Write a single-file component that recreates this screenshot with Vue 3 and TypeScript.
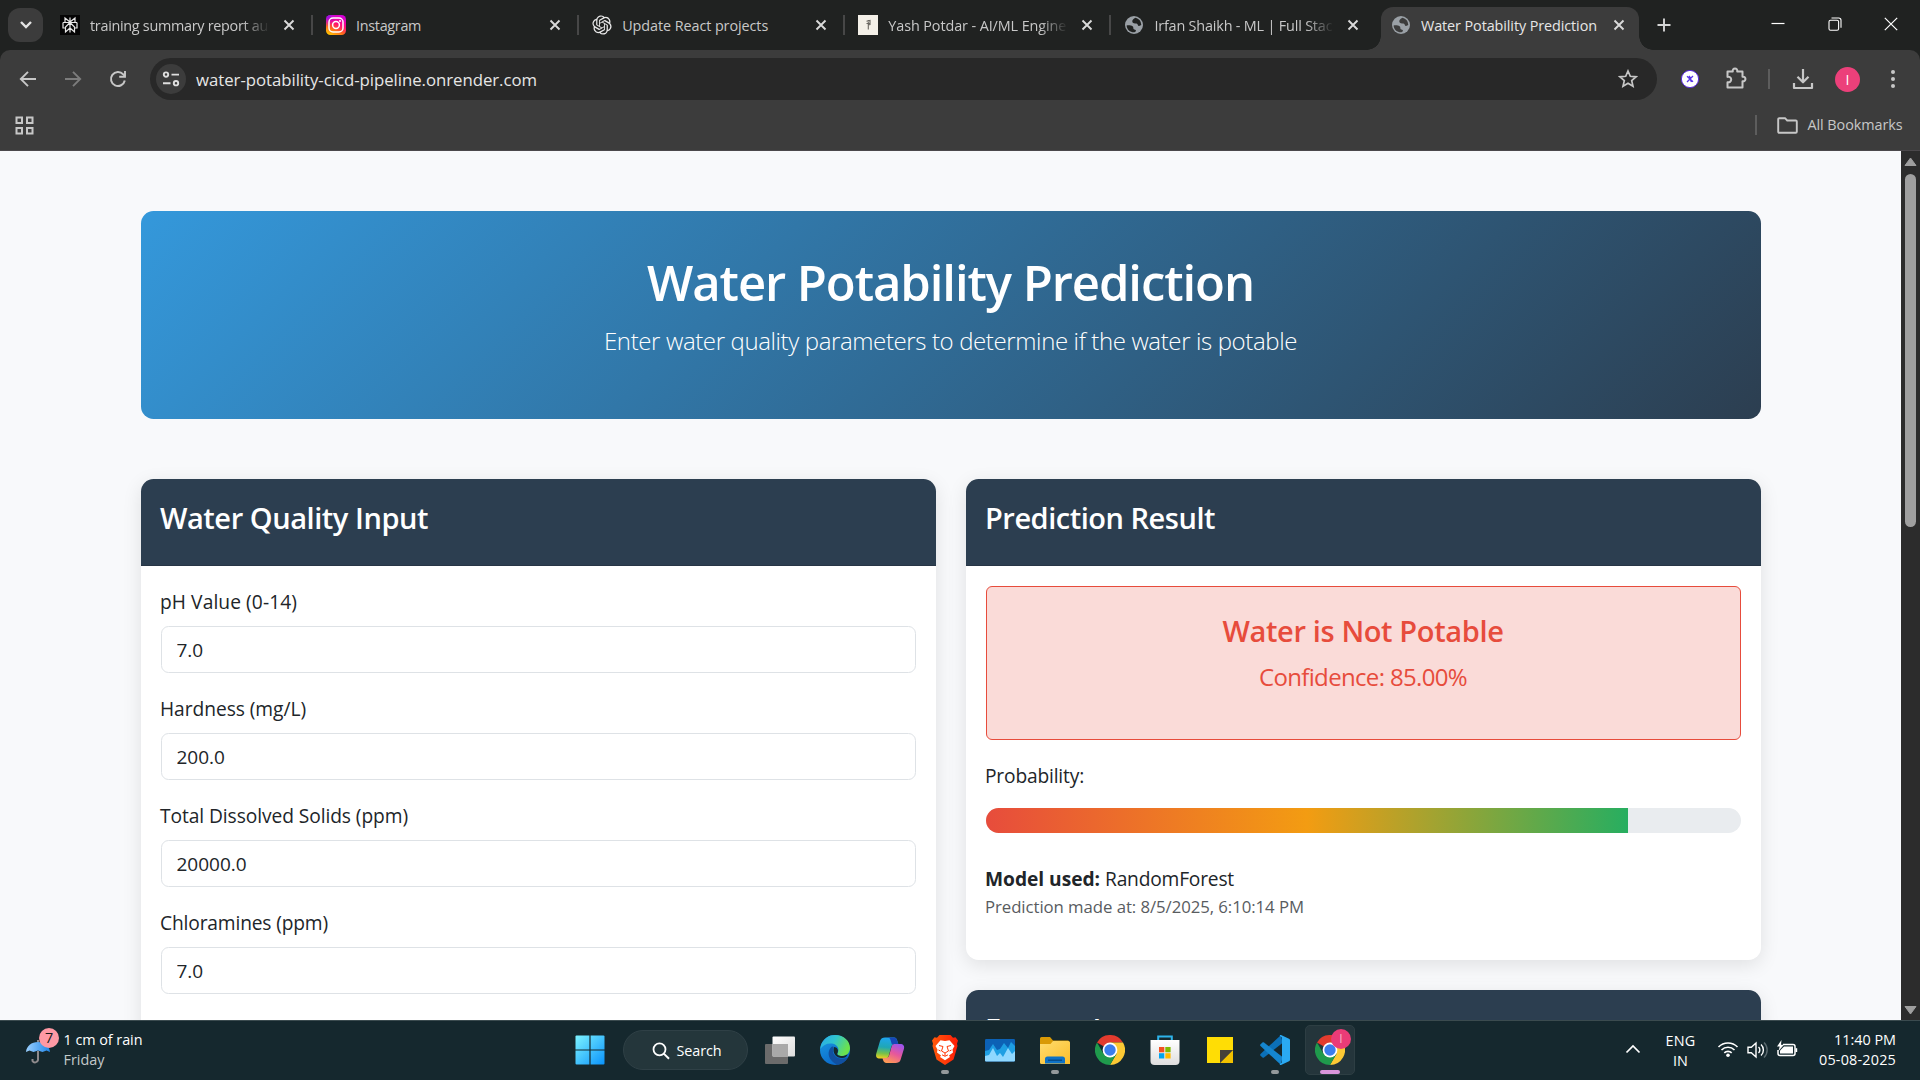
<script setup lang="ts">
import type { Directive } from 'vue'

interface Tab {
  icon: 'perplexity' | 'instagram' | 'openai' | 'page' | 'globe'
  title: string
  width: number
  active?: boolean
}

interface Field {
  label: string
  width: number
  value: string
}

const tabs: Tab[] = [
  { icon: 'perplexity', title: 'training summary report au', width: 178 },
  { icon: 'instagram', title: 'Instagram', width: 65 },
  { icon: 'openai', title: 'Update React projects', width: 146 },
  { icon: 'page', title: 'Yash Potdar - AI/ML Engine', width: 178 },
  { icon: 'globe', title: 'Irfan Shaikh - ML | Full Stac', width: 178 },
  { icon: 'globe', title: 'Water Potability Prediction', width: 176, active: true },
]

const fields: Field[] = [
  { label: 'pH Value (0-14)', width: 137, value: '7.0' },
  { label: 'Hardness (mg/L)', width: 146, value: '200.0' },
  { label: 'Total Dissolved Solids (ppm)', width: 248, value: '20000.0' },
  { label: 'Chloramines (ppm)', width: 168, value: '7.0' },
]

const confidence = 85

/* Tracks a line of text so that it takes the given width in pixels. */
const vFit: Directive<HTMLElement, number> = {
  mounted(el, binding) {
    const count = (el.textContent ?? '').trim().length
    const natural = el.getBoundingClientRect().width
    el.style.letterSpacing = `${((binding.value - natural) / count).toFixed(3)}px`
  },
}
</script>

<template>
  <div class="screen">
    <header class="tabstrip">
      <button class="tab-search">
        <svg width="14" height="10" viewBox="0 0 14 10"><path d="M2 2l5 5 5-5" fill="none" stroke="#e3e3e3" stroke-width="2.4" /></svg>
      </button>
      <div class="tabs">
        <div v-for="(tab, i) in tabs" :key="i" class="tab" :class="{ active: tab.active, divided: i < 4 }">
          <span class="favicon">
            <svg v-if="tab.icon === 'perplexity'" width="20" height="20" viewBox="0 0 20 20">
              <rect width="20" height="20" fill="#050505" />
              <path d="M10 2.500v15M10 7L5 3v4.500M10 7l5-4v4.500M3 7.500h14M3 7.500V13h2.500M17 7.500V13h-2.500M10 7.500L5.500 12v5L10 13M10 7.500l4.500 4.500v5L10 13" fill="none" stroke="#e8e8e8" stroke-width="1.200" />
            </svg>
            <svg v-else-if="tab.icon === 'instagram'" width="20" height="20" viewBox="0 0 20 20">
              <defs>
                <linearGradient id="ig" x1=".2" y1="1" x2=".7" y2="0">
                  <stop offset="0" stop-color="#ffc400" /><stop offset=".3" stop-color="#ff6a1a" />
                  <stop offset=".6" stop-color="#ff0a78" /><stop offset="1" stop-color="#d300d8" />
                </linearGradient>
                <radialGradient id="ig2" cx="0" cy="0" r=".6"><stop offset="0" stop-color="#6a1bff" /><stop offset="1" stop-color="#c000ff" stop-opacity="0" /></radialGradient>
              </defs>
              <rect width="20" height="20" rx="4.500" fill="url(#ig)" />
              <rect width="20" height="20" rx="4.500" fill="url(#ig2)" />
              <rect x="3" y="3" width="14" height="14" rx="4" fill="none" stroke="#fff" stroke-width="1.500" />
              <circle cx="10" cy="10" r="3.400" fill="none" stroke="#fff" stroke-width="1.500" />
              <circle cx="14" cy="6" r="1" fill="#fff" />
            </svg>
            <svg v-else-if="tab.icon === 'openai'" width="20" height="20" viewBox="-.5 -.5 25 25">
              <path fill="#e8e8e8" d="M22.282 9.821a5.985 5.985 0 0 0-.516-4.910 6.046 6.046 0 0 0-6.510-2.900A6.065 6.065 0 0 0 4.981 4.182a5.985 5.985 0 0 0-3.998 2.900 6.046 6.046 0 0 0 .743 7.097 5.980 5.980 0 0 0 .510 4.911 6.051 6.051 0 0 0 6.515 2.900A5.985 5.985 0 0 0 13.260 24a6.056 6.056 0 0 0 5.772-4.206 5.990 5.990 0 0 0 3.998-2.900 6.056 6.056 0 0 0-.748-7.073zM13.260 22.430a4.476 4.476 0 0 1-2.876-1.041l.141-.081 4.779-2.758a.795.795 0 0 0 .393-.681v-6.737l2.020 1.169a.071.071 0 0 1 .038.052v5.583a4.504 4.504 0 0 1-4.495 4.494zM3.600 18.304a4.471 4.471 0 0 1-.535-3.014l.142.085 4.783 2.759a.771.771 0 0 0 .781 0l5.843-3.369v2.332a.080.080 0 0 1-.033.062L9.740 19.950a4.500 4.500 0 0 1-6.140-1.646zM2.341 7.896a4.485 4.485 0 0 1 2.366-1.973V11.600a.766.766 0 0 0 .388.677l5.815 3.354-2.020 1.169a.076.076 0 0 1-.071 0l-4.830-2.787A4.504 4.504 0 0 1 2.341 7.872zm16.597 3.855l-5.833-3.387L15.119 7.200a.076.076 0 0 1 .071 0l4.830 2.791a4.494 4.494 0 0 1-.676 8.105v-5.678a.790.790 0 0 0-.407-.667zm2.010-3.023l-.141-.085-4.774-2.782a.776.776 0 0 0-.785 0L9.409 9.230V6.897a.066.066 0 0 1 .028-.061l4.830-2.787a4.500 4.500 0 0 1 6.680 4.660zm-12.640 4.135l-2.020-1.164a.080.080 0 0 1-.038-.057V6.075a4.500 4.500 0 0 1 7.375-3.453l-.142.080L8.704 5.460a.795.795 0 0 0-.393.681zm1.097-2.365l2.602-1.500 2.607 1.500v2.999l-2.597 1.500-2.607-1.500z" />
            </svg>
            <svg v-else-if="tab.icon === 'page'" width="20" height="20" viewBox="0 0 20 20">
              <rect width="20" height="20" fill="#f4f0e8" />
              <path d="M10.300 5v9.500M8.500 6.200l3.500-.7v4l-2 .5M8.500 8.500h3" stroke="#6b6862" stroke-width="1.100" fill="none" />
            </svg>
            <svg v-else width="20" height="20" viewBox="0 0 20 20">
              <circle cx="10" cy="10" r="9" fill="#9aa0a6" />
              <path d="M11.500 2.700c-2 1-3.500 2-3.200 4 .3 1.800 2.500 1.600 4.200 1.800 1.500.2 1 2.500 2.500 2.500 1 0 1.500-.8 2.300-1A7.300 7.300 0 0 0 11.500 2.700z" :fill="tab.active ? '#3c3c3c' : '#202221'" />
              <path d="M2.600 10.500c2-.3 4.600-.2 6 .8 1.300 1 .2 2.200 1.200 3 .8.600 1.900.2 2.200 1.400-.3.800-.8 1.200-1.500 1.600-4.300.2-7.600-2.600-7.900-6.800z" :fill="tab.active ? '#3c3c3c' : '#202221'" />
            </svg>
          </span>
          <span class="tab-title" :class="{ fading: tab.width === 178 }"><span v-fit="tab.width" class="fit">{{ tab.title }}</span></span>
          <svg class="tab-close" width="12" height="12" viewBox="0 0 12 12"><path d="M1.500 1.500l9 9M10.500 1.500l-9 9" stroke="#dadada" stroke-width="1.900" /></svg>
        </div>
      </div>
      <svg class="new-tab" width="14" height="14" viewBox="0 0 14 14"><path d="M7 .5v13M.5 7h13" stroke="#d5d5d5" stroke-width="1.900" /></svg>
      <div class="window-controls">
        <svg width="14" height="14" viewBox="0 0 14 14"><path d="M.5 6.500h13" stroke="#fff" stroke-width="1.200" /></svg>
        <svg width="14" height="14" viewBox="0 0 14 14"><rect x="1" y="3.200" width="9.600" height="10" rx="1.500" fill="none" stroke="#fff" stroke-width="1.100" /><path d="M3.500 1h7.200a2.300 2.300 0 0 1 2.300 2.300v7.500" fill="none" stroke="#fff" stroke-width="1.100" /></svg>
        <svg width="14" height="14" viewBox="0 0 14 14"><path d="M.8.8l12.400 12.400M13.200.8L.8 13.200" stroke="#fff" stroke-width="1.200" /></svg>
      </div>
    </header>

    <div class="chrome">
      <div class="toolbar">
        <div class="nav">
          <svg width="18" height="18" viewBox="0 0 18 18"><path d="M17 9H2.500M9 1.800L1.800 9 9 16.200" fill="none" stroke="#c7c7c7" stroke-width="1.900" /></svg>
          <svg width="18" height="18" viewBox="0 0 18 18"><path d="M1 9h14.500M9 1.800L16.200 9 9 16.200" fill="none" stroke="#7c7c7c" stroke-width="1.900" /></svg>
          <svg width="18" height="18" viewBox="0 0 18 18"><path d="M15.800 10.500A7 7 0 1 1 14.200 4.300L16 6.100" fill="none" stroke="#c7c7c7" stroke-width="2" /><path d="M16 1v5.800h-5.800" fill="none" stroke="#c7c7c7" stroke-width="1.900" /></svg>
        </div>
        <div class="omnibox">
          <span class="site-info">
            <svg width="18" height="18" viewBox="0 0 18 18" fill="none" stroke="#dedede" stroke-width="1.900"><circle cx="4" cy="4.600" r="2.200" /><path d="M9.500 4.600H17M1 13.200h7.500" /><circle cx="14" cy="13.200" r="2.200" /></svg>
          </span>
          <span v-fit="341" class="fit url">water-potability-cicd-pipeline.onrender.com</span>
          <svg class="star" width="20" height="20" viewBox="0 0 20 20"><path d="M10 2l2.300 5.300 5.700.5-4.300 3.800 1.300 5.700-5-3-5 3 1.300-5.700L2 7.800l5.700-.5z" fill="none" stroke="#c7c7c7" stroke-width="1.700" /></svg>
        </div>
        <div class="actions">
          <svg class="ext" width="20" height="20" viewBox="0 0 20 20"><circle cx="10" cy="10" r="8.600" fill="#fff" stroke="#5b2be0" stroke-width="1" /><path d="M7 7.200l6 5.600M13 7l-6 6M9 7l1.500 2M11.500 13l-1.200-2" stroke="#5a35e8" stroke-width="1.300" /></svg>
          <svg class="puzzle" width="24" height="24" viewBox="0 0 24 24"><path d="M3.500 5h5.300a2.300 2.300 0 1 1 4.400 0h5.300v5.300a2.300 2.300 0 1 1 0 4.400v6.300h-15v-5.300a2.800 2.800 0 1 0 0-5.300z" transform="translate(0 -.5)" fill="none" stroke="#c7c7c7" stroke-width="2" stroke-linejoin="round" /></svg>
          <i class="bar"></i>
          <svg class="download" width="22" height="22" viewBox="0 0 22 22"><path d="M11 1v13M5.500 8.800L11 14.300l5.500-5.500M2 15v5h18v-5" fill="none" stroke="#c7c7c7" stroke-width="2.200" stroke-linejoin="round" /></svg>
          <span class="avatar">I</span>
          <svg class="menu" width="6" height="20" viewBox="0 0 6 20" fill="#c7c7c7"><circle cx="3" cy="3" r="2" /><circle cx="3" cy="10" r="2" /><circle cx="3" cy="17" r="2" /></svg>
        </div>
      </div>
      <div class="bookmarks">
        <svg width="19" height="19" viewBox="0 0 19 19" fill="none" stroke="#c7c7c7" stroke-width="2"><rect x="1.500" y="1.500" width="5.500" height="5.500" /><rect x="12" y="1.500" width="5.500" height="5.500" /><rect x="1.500" y="12" width="5.500" height="5.500" /><rect x="12" y="12" width="5.500" height="5.500" /></svg>
        <div class="all">
          <i class="bar"></i>
          <svg width="21" height="17" viewBox="0 0 21 17"><path d="M1.200 14.800V2.200a1 1 0 0 1 1-1H8l2.200 2.300h8.600a1 1 0 0 1 1 1v10.300a1 1 0 0 1-1 1H2.200a1 1 0 0 1-1-1z" fill="none" stroke="#c7c7c7" stroke-width="1.900" /></svg>
          <span v-fit="95" class="fit">All Bookmarks</span>
        </div>
      </div>
    </div>

    <div class="viewport">
      <main class="page">
        <section class="hero">
          <h1><span v-fit="607" class="fit">Water Potability Prediction</span></h1>
          <p><span v-fit="693" class="fit">Enter water quality parameters to determine if the water is potable</span></p>
        </section>
        <div class="columns">
          <section class="card">
            <h3 class="card-header"><span v-fit="268" class="fit">Water Quality Input</span></h3>
            <form class="card-body">
              <div v-for="field in fields" :key="field.label" class="field">
                <label><span v-fit="field.width" class="fit">{{ field.label }}</span></label>
                <input type="text" :value="field.value" />
              </div>
            </form>
          </section>
          <div class="side">
            <section class="card result">
              <h3 class="card-header"><span v-fit="230" class="fit">Prediction Result</span></h3>
              <div class="card-body">
                <div class="alert">
                  <h3><span v-fit="281" class="fit">Water is Not Potable</span></h3>
                  <p><span v-fit="208" class="fit">Confidence: {{ confidence.toFixed(2) }}%</span></p>
                </div>
                <div class="caption"><span v-fit="99" class="fit">Probability:</span></div>
                <div class="meter"><div class="meter-fill" :style="{ width: confidence + '%' }"></div></div>
                <div class="model"><strong v-fit="115" class="fit">Model used:</strong><span v-fit="129" class="fit">RandomForest</span></div>
                <div class="stamp"><span v-fit="319" class="fit">Prediction made at: 8/5/2025, 6:10:14 PM</span></div>
              </div>
            </section>
            <section class="card">
              <h3 class="card-header"><span v-fit="260" class="fit">Feature Importance</span></h3>
            </section>
          </div>
        </div>
      </main>
      <aside class="scrollbar">
        <svg width="13" height="10" viewBox="0 0 13 10"><path d="M6.500 1L12 8.500H1z" fill="#9f9f9f" stroke="#9f9f9f" stroke-linejoin="round" /></svg>
        <i class="thumb"></i>
        <svg class="down" width="13" height="10" viewBox="0 0 13 10"><path d="M6.500 9L12 1.500H1z" fill="#9f9f9f" stroke="#9f9f9f" stroke-linejoin="round" /></svg>
      </aside>
    </div>

    <footer class="taskbar">
      <div class="weather">
        <div class="umbrella">
          <svg width="26" height="28" viewBox="0 0 26 28">
            <defs><linearGradient id="um" x1="0" x2="1"><stop offset="0" stop-color="#9bd0ff" /><stop offset="1" stop-color="#1f86e8" /></linearGradient></defs>
            <path d="M13 3v2M13 14v9a3 3 0 0 1-5.500 1v-2" fill="none" stroke="#8e8a8c" stroke-width="2" />
            <path d="M1 15C1.500 9 6.500 5 13 5s11.500 4 12 10l-3.500-1.500L17.500 15 13 13.500 8.500 15 4.500 13.500z" fill="url(#um)" />
          </svg>
          <span class="count">7</span>
        </div>
        <div class="weather-text"><span v-fit="79" class="fit">1 cm of rain</span><span v-fit="41" class="fit dim">Friday</span></div>
      </div>
      <nav class="apps">
        <span class="app">
          <svg width="30" height="30" viewBox="0 0 30 30">
            <defs><linearGradient id="win" x1="0" y1="0" x2="1" y2="1" gradientUnits="objectBoundingBox"><stop offset="0" stop-color="#7df3ff" /><stop offset="1" stop-color="#0a93fb" /></linearGradient>
              <mask id="panes"><rect width="30" height="30" fill="#fff" /><path d="M15 0v30M0 15h30" stroke="#000" stroke-width="1.200" /></mask></defs>
            <rect x=".5" y=".5" width="29" height="29" rx="1" fill="url(#win)" mask="url(#panes)" />
          </svg>
        </span>
        <div class="search">
          <svg width="18" height="18" viewBox="0 0 18 18"><circle cx="7.500" cy="7.300" r="6" fill="none" stroke="#fff" stroke-width="1.800" /><path d="M11.800 11.600l5.200 5.200" stroke="#fff" stroke-width="2" /></svg>
          <span v-fit="45" class="fit">Search</span>
        </div>
        <span class="app">
          <svg width="30" height="30" viewBox="0 0 30 30">
            <defs><linearGradient id="tv" x1="0" y1="0" x2="1" y2="1"><stop offset="0" stop-color="#fff" /><stop offset="1" stop-color="#dcdcdc" /></linearGradient></defs>
            <rect x="0" y="9" width="23" height="20" rx="1" fill="#6b6b6b" /><rect x="7.500" y="1.500" width="22.500" height="20" rx="1" fill="url(#tv)" /><rect x="7.500" y="9" width="15.500" height="12.500" fill="#a9a9a9" />
          </svg>
        </span>
        <span class="app">
          <svg width="30" height="30" viewBox="0 0 30 30">
            <defs>
              <linearGradient id="e1" x1="0" y1="0" x2="1" y2=".4"><stop offset="0" stop-color="#2aa8ea" /><stop offset=".5" stop-color="#30c5cf" /><stop offset="1" stop-color="#6be24d" /></linearGradient>
              <linearGradient id="e2" x1="0" y1="0" x2=".6" y2="1"><stop offset="0" stop-color="#1b9de2" /><stop offset="1" stop-color="#0a66c9" /></linearGradient>
            </defs>
            <circle cx="15" cy="15" r="15" fill="url(#e2)" />
            <path d="M1 10C4 3 9 0 15 0c9 0 15 6 15 13 0 5-3.500 8-8 8-3 0-5.500-1.200-4.500-2.800 2.200-3 .8-8.700-5.500-9.700C7 8 3 10 .2 14z" fill="url(#e1)" />
            <path d="M12 11.500c-4 3-4.500 9-1 13.500 2 2.500 5 4.500 7 4.700 4.500-.8 8-4 9.700-7.300-6 3.200-13.500.6-14.700-5.400-.3-2 .2-4 .7-5.200z" fill="#1150a0" />
            <path d="M14 12c3 0 5 3 3.500 6-1.200 2 1.500 3 4.500 3 2.200 0 4-.6 5.500-1.800-.3 2.200-2.500 3.800-5.500 3.800-5.500 0-10-4.500-8-11z" fill="#15282e" />
          </svg>
        </span>
        <span class="app">
          <svg width="30" height="30" viewBox="0 0 30 30">
            <defs>
              <linearGradient id="c1" x1=".3" y1="0" x2=".2" y2="1"><stop offset="0" stop-color="#1ea5ee" /><stop offset=".45" stop-color="#20a7b4" /><stop offset=".75" stop-color="#77c14a" /><stop offset="1" stop-color="#f5d01d" /></linearGradient>
              <linearGradient id="c2" x1=".8" y1="0" x2=".3" y2="1"><stop offset="0" stop-color="#9b54ef" /><stop offset=".5" stop-color="#e6579c" /><stop offset="1" stop-color="#ff9a55" /></linearGradient>
            </defs>
            <path d="M10 2.500h9c2 0 2.800 1.500 3.500 4L23.300 9h-3.500c-2 0-3 1-3.600 3l-2.500 9c-.6 1.800-1.700 2.500-3.500 2.500H5c-3.500 0-4.500-2-3.700-5L5 6c.8-2.500 2.500-3.500 5-3.500z" fill="url(#c1)" />
            <path d="M19 2.500c2 0 2.800 1.500 3.500 4L23.300 9h-3.500l-3 .2L15.500 5c-.6-1.800-1.500-2.500-3.500-2.500z" fill="#1747b7" />
            <path d="M20.500 9H25c3.500 0 4.700 2 3.900 5l-3.400 11c-.8 2.200-2.500 3-5 3h-9c-2 0-3-1.200-3.600-3.500l-.4-1.500h3c2 0 3-.6 3.600-2.500l2.500-9C17.200 9.600 18.500 9 20.500 9z" fill="url(#c2)" />
          </svg>
        </span>
        <span class="app running">
          <svg width="30" height="30" viewBox="0 0 30 30">
            <defs><linearGradient id="br" x1="0" x2="1"><stop offset="0" stop-color="#ff5a0a" /><stop offset="1" stop-color="#ff1c08" /></linearGradient></defs>
            <path d="M9.500 0h11L23 2.700l2.500-.5L28 5.500l-1 3.200.5 2.300-4 13.500L15 30l-8.500-5.500L2.500 11 3 8.700 2 5.500l2.500-3.300 2.500.5z" fill="url(#br)" />
            <path d="M15 6l4.500-.8L24.500 11l-2 3.500.5 3-4 3 1 1.500-5 3.300L10 22l1-1.500-4-3 .5-3-2-3.500 5-5.800z" fill="#fff" />
            <path d="M9 10.500l4 1-1.500 4.500L15 18l3.500-2L17 11.500l4-1M8.500 15l2 1M21.500 15l-2 1M12 19.800l3 1.500 3-1.500M15 18v3" fill="none" stroke="#ff3a0a" stroke-width="1" />
          </svg>
        </span>
        <span class="app">
          <svg width="30" height="30" viewBox="0 0 30 30">
            <rect x="0" y="4" width="30" height="22.500" rx="1.200" fill="#0c61b5" />
            <path d="M0 16l4-1 4-6 4 6 3-1 4-6 4 5 3-6 4 4v13H0z" fill="#1e9fe3" />
            <path d="M0 21l4-1 4-7 4 8 3-3 3 4 5-9 4 6 3-3v9.500a1 1 0 0 1-1 1H1a1 1 0 0 1-1-1z" fill="#8fd8ff" />
          </svg>
        </span>
        <span class="app running">
          <svg width="30" height="30" viewBox="0 0 30 30">
            <defs><linearGradient id="fe" x1="0" y1="0" x2="1" y2="1"><stop offset="0" stop-color="#ffdc6e" /><stop offset="1" stop-color="#fbbd2b" /></linearGradient></defs>
            <path d="M0 3.500a1.500 1.500 0 0 1 1.500-1.500h8.500l3 3.500h15.500v5H0z" fill="#d99a06" />
            <path d="M0 9h10.500L13 6h15.500A1.500 1.500 0 0 1 30 7.500V29H1.500A1.500 1.500 0 0 1 0 27.500z" fill="url(#fe)" />
            <path d="M5 28.500V24a2.500 2.500 0 0 1 2.500-2.500h15A2.500 2.500 0 0 1 25 24v4.500z" fill="#0e72c6" /><path d="M8 25.200h14" stroke="#06457f" stroke-width="1.200" />
          </svg>
        </span>
        <span class="app">
          <svg width="30" height="30" viewBox="0 0 30 30"><path d="M15 15L2 7.500A15 15 0 0 1 28 7.500H15z" fill="#e33b2e" /><path d="M28 7.500A15 15 0 0 1 15 30l6.500-11.200L15 7.500z" fill="#fcc934" /><path d="M2 7.500A15 15 0 0 0 15 30l6.500-11.200L8.500 18.800z" fill="#1f9a4c" /><circle cx="15" cy="15" r="7.400" fill="#fff" /><circle cx="15" cy="15" r="5.700" fill="#3b7ded" /></svg>
        </span>
        <span class="app">
          <svg width="30" height="30" viewBox="0 0 30 30">
            <defs><linearGradient id="st" x1="0" y1="0" x2="0" y2="1"><stop offset="0" stop-color="#fff" /><stop offset="1" stop-color="#dedede" /></linearGradient></defs>
            <path d="M8.200 6.500V1.500h13.600v5" fill="none" stroke="#2db3ea" stroke-width="2" />
            <path d="M.5 5h29v21a4 4 0 0 1-4 4h-21a4 4 0 0 1-4-4z" fill="url(#st)" />
            <rect x="9" y="12" width="5.300" height="5.300" fill="#f25022" /><rect x="15.300" y="12" width="5.300" height="5.300" fill="#7fba00" /><rect x="9" y="18.200" width="5.300" height="5.300" fill="#00a4ef" /><rect x="15.300" y="18.200" width="5.300" height="5.300" fill="#ffb900" />
          </svg>
        </span>
        <span class="app">
          <svg width="30" height="30" viewBox="0 0 30 30"><path d="M2 2h26v13L15 28H2z" fill="#ffdd05" /><path d="M15 28h13V15z" fill="#f2c200" /><path d="M15 28V15h13z" fill="#454039" /></svg>
        </span>
        <span class="app running">
          <svg width="30" height="30" viewBox="0 0 30 30"><path d="M21 0l1.500 8L4 22.500c-.5.300-1 .3-1.500 0L.5 20.700c-.5-.5-.5-1.300 0-1.800z" fill="#0b70b8" /><path d="M21 30l1.500-8L4 7.500c-.5-.3-1-.3-1.500 0L.5 9.300c-.5.500-.5 1.300 0 1.800z" fill="#1586cf" /><path d="M21 0l8 3.700c.6.300 1 .8 1 1.500v19.600c0 .7-.4 1.200-1 1.500L21 30c-1 .3-1.500 0-1-1l2-1.500V2.500L20 1c-.5-1 0-1.200 1-1z" fill="#2aaaf3" /></svg>
        </span>
        <span class="app current">
          <svg width="30" height="30" viewBox="0 0 30 30"><path d="M15 15L2 7.500A15 15 0 0 1 28 7.500H15z" fill="#e33b2e" /><path d="M28 7.500A15 15 0 0 1 15 30l6.500-11.200L15 7.500z" fill="#fcc934" /><path d="M2 7.500A15 15 0 0 0 15 30l6.500-11.200L8.500 18.800z" fill="#1f9a4c" /><circle cx="15" cy="15" r="7.400" fill="#fff" /><circle cx="15" cy="15" r="5.700" fill="#3b7ded" /></svg>
          <span class="profile">I</span>
        </span>
      </nav>
      <div class="tray">
        <svg class="up" width="16" height="10" viewBox="0 0 16 10"><path d="M1.500 8.500L8 2l6.500 6.500" fill="none" stroke="#fff" stroke-width="1.700" /></svg>
        <div class="lang"><span v-fit="30" class="fit">ENG</span><span v-fit="15" class="fit">IN</span></div>
        <svg class="wifi" width="22" height="18" viewBox="0 0 22 18" fill="none" stroke="#fff" stroke-width="1.600"><path d="M1.500 7a13.300 13.300 0 0 1 19 0M4.500 10a9.200 9.200 0 0 1 13 0M7.300 12.900a5.200 5.200 0 0 1 7.400 0" /><circle cx="11" cy="15.300" r="1.800" fill="#fff" stroke="none" /></svg>
        <svg class="sound" width="21" height="18" viewBox="0 0 21 18" fill="none" stroke="#fff" stroke-width="1.400"><path d="M1 6.300h3.300L9 2v14l-4.700-4.300H1z" /><path d="M11.500 6a4 4 0 0 1 0 6M14 3.500a7.500 7.500 0 0 1 0 11" /><path d="M17 1.500a10.500 10.500 0 0 1 0 15" stroke="#5c6b70" /></svg>
        <svg class="battery" width="22" height="18" viewBox="0 0 22 18"><path d="M7 4.500h10a2 2 0 0 1 2 2v7a2 2 0 0 1-2 2H4a2 2 0 0 1-2-2V10" fill="none" stroke="#fff" stroke-width="1.500" /><path d="M8 6.500h9v7H4v-3z" fill="#fff" /><path d="M19.500 8.200h1.700v3.800h-1.700z" fill="#fff" /><path d="M5.500 0L1 6.500h2.700L2.500 11 8 4.800H5z" fill="#fff" /></svg>
        <div class="clock"><span v-fit="62" class="fit">11:40 PM</span><span v-fit="77" class="fit">05-08-2025</span></div>
      </div>
    </footer>
  </div>
</template>

<style>
html,
body {
  margin: 0;
  overflow: hidden;
}
</style>

<style scoped>
.screen {
  display: flex;
  flex-direction: column;
  width: 1920px;
  height: 1080px;
  overflow: hidden;
  background: #202221;
  font-family: 'Open Sans', 'Noto Sans', sans-serif;
}
.screen *,
.screen *::before,
.screen *::after {
  box-sizing: border-box;
}
svg {
  display: block;
  flex: none;
}
.fit {
  display: inline-block;
  white-space: nowrap;
}

/* Tab strip */
.tabstrip {
  display: flex;
  height: 50px;
  flex: none;
  background: #202221;
}
.tab-search {
  display: flex;
  align-items: center;
  justify-content: center;
  width: 35px;
  height: 34px;
  margin: 8px 5px 0 8px;
  padding: 0;
  border: 0;
  border-radius: 12px;
  background: #3c3c3c;
}
.tabs {
  display: flex;
  height: 50px;
}
.tab {
  position: relative;
  display: flex;
  align-items: center;
  width: 266.100px;
  height: 36px;
  margin-top: 7px;
  padding-left: 12px;
  color: #c8c8c8;
  font-size: 14.400px;
}
.tab.divided {
  background: linear-gradient(#474747, #474747) no-repeat 263px 8px / 2px 20px;
}
.tab.active {
  width: 258px;
  height: 43px;
  margin-left: 2.500px;
  padding: 0 0 7px 10px;
  border-radius: 12px 12px 0 0;
  background: #3c3c3c;
  color: #e6e6e6;
}
.tab.active::before,
.tab.active::after {
  position: absolute;
  bottom: 0;
  width: 14px;
  height: 14px;
  content: '';
}
.tab.active::before {
  left: -14px;
  background: radial-gradient(circle at 0 0, transparent 13.500px, #3c3c3c 14px);
}
.tab.active::after {
  right: -14px;
  background: radial-gradient(circle at 100% 0, transparent 13.500px, #3c3c3c 14px);
}
.favicon {
  width: 20px;
  margin-right: 10px;
}
.tab-title {
  width: 178px;
  padding-top: 1px;
  overflow: hidden;
  line-height: 24px;
}
.tab-title.fading {
  mask-image: linear-gradient(to right, #000 152px, transparent 180px);
}
.tab-close {
  margin-left: 15px;
}
.tab.active .tab-close {
  margin-left: 14px;
}
.new-tab {
  margin: 18px 0 0 18.500px;
}
.window-controls {
  display: flex;
  gap: 42.500px;
  margin: 17px 22px 0 auto;
}

/* Toolbar */
.chrome {
  height: 101px;
  flex: none;
  border-bottom: 1px solid #4b484b;
  border-radius: 10px 10px 0 0;
  background: #3c3c3c;
}
.toolbar {
  display: flex;
  align-items: center;
  height: 58px;
}
.nav {
  display: flex;
  gap: 27px;
  width: 150px;
  padding-left: 18.500px;
}
.omnibox {
  display: flex;
  align-items: center;
  width: 1507px;
  height: 42px;
  border-radius: 21px;
  background: #282828;
}
.site-info {
  display: flex;
  align-items: center;
  justify-content: center;
  width: 30px;
  height: 30px;
  margin: 0 10px 0 6px;
  border-radius: 50%;
  background: #3c3c3c;
}
.url {
  margin-top: 2px;
  color: #e6e6e6;
  font-size: 16.800px;
  line-height: 24px;
}
.star {
  margin: 0 19.500px 0 auto;
}
.actions {
  display: flex;
  align-items: center;
  flex: 1;
}
.ext {
  margin-left: 23px;
}
.puzzle {
  margin-left: 24px;
}
.bar {
  width: 2px;
  height: 20px;
  background: #5d5d5d;
}
.actions .bar {
  margin-left: 20px;
}
.download {
  margin-left: 21.500px;
}
.avatar {
  display: flex;
  align-items: center;
  justify-content: center;
  width: 25px;
  height: 25px;
  margin-left: 21.500px;
  border-radius: 50%;
  background: #ec407a;
  color: #fff;
  font-size: 14px;
}
.menu {
  margin-left: 29.500px;
}
.bookmarks {
  display: flex;
  align-items: center;
  justify-content: space-between;
  height: 34px;
  padding: 0 17.500px 0 15px;
}
.all {
  display: flex;
  align-items: center;
  color: #c7c7c7;
  font-size: 14.400px;
}
.all svg {
  margin: 0 10px 0 20px;
}
.all .fit {
  margin-bottom: 2px;
}

/* Page */
.viewport {
  display: flex;
  height: 869px;
  flex: none;
  overflow: hidden;
}
.page {
  width: 1901px;
  padding: 60px 140px 0 141px;
  overflow: hidden;
  background: #f8f9fb;
  color: #212529;
}
.page .fit {
  margin-left: -1px;
}
.hero {
  height: 208px;
  padding-top: 41px;
  border-radius: 12.500px;
  background: linear-gradient(135deg, #3498db, #2c3e50);
  color: #fff;
  text-align: center;
}
.hero h1 {
  margin: 0;
  font-size: 49px;
  font-weight: 650;
  line-height: 60px;
}
.hero p {
  margin: 10px 0 0;
  font-size: 24px;
  font-weight: 300;
  line-height: 38px;
}
.columns {
  display: flex;
  align-items: flex-start;
  gap: 30px;
  margin-top: 60px;
}
.side {
  display: flex;
  flex-direction: column;
  gap: 30px;
}
.card {
  width: 795px;
  border-radius: 12.500px;
  background: #fff;
  box-shadow: 0 5px 19px rgba(0, 0, 0, 0.1);
}
.columns > .card {
  height: 900px;
}
.card.result {
  height: 481px;
}
.card-header {
  height: 87px;
  margin: 0;
  padding: 20px 20px 0;
  border-bottom: 1px solid #273545;
  border-radius: 12.500px 12.500px 0 0;
  background: #2c3e50;
  color: #fff;
  font-size: 29px;
  font-weight: 620;
  line-height: 38px;
}
.card-body {
  padding: 20px;
  font-size: 19.200px;
}
.field {
  margin-bottom: 20px;
}
.field label {
  display: block;
  height: 30px;
  margin-bottom: 10px;
  line-height: 32px;
}
.field input {
  display: block;
  width: 755px;
  height: 47px;
  padding: 0 14.500px;
  border: 1px solid #dee2e6;
  border-radius: 7.500px;
  outline: 0;
  background: #fff;
  color: #212529;
  font: 19px 'Open Sans', 'Noto Sans', sans-serif;
}
.alert {
  height: 154px;
  padding-top: 24px;
  border: 1px solid #e74c3c;
  border-radius: 6px;
  background: #fadbd8;
  color: #e74c3c;
  text-align: center;
}
.alert h3 {
  margin: 0;
  font-size: 29px;
  font-weight: 600;
  line-height: 40px;
}
.alert p {
  margin: 7px 0 0;
  font-size: 24px;
  font-weight: 400;
  line-height: 38px;
}
.caption {
  margin-top: 20px;
  line-height: 32px;
}
.meter {
  height: 25px;
  margin-top: 16px;
  overflow: hidden;
  border-radius: 12.500px;
  background: #e9ecef;
}
.meter-fill {
  height: 25px;
  background: linear-gradient(90deg, #e74c3c, #f39c12, #27ae60);
}
.model {
  display: flex;
  gap: 6px;
  margin-top: 30px;
  line-height: 31px;
}
.model strong {
  font-weight: 700;
}
.stamp {
  margin-top: 1px;
  color: #595c5f;
  font-size: 16.800px;
  line-height: 24px;
}

/* Scrollbar */
.scrollbar {
  display: flex;
  flex-direction: column;
  align-items: center;
  width: 19px;
  padding: 6px 0 5px;
  background: #2c2c2c;
}
.thumb {
  width: 11px;
  height: 353px;
  margin-top: 7px;
  border-radius: 5.500px;
  background: #9f9f9f;
}
.down {
  margin-top: auto;
}

/* Taskbar */
.taskbar {
  display: flex;
  height: 60px;
  flex: none;
  border-top: 1px solid #3b4b4f;
  background: #15282e;
  color: #fff;
  font-size: 14.400px;
  line-height: 20px;
}
.weather {
  display: flex;
  width: 562.500px;
  padding-left: 25px;
}
.umbrella {
  position: relative;
  width: 38.500px;
  padding-top: 16px;
}
.count {
  position: absolute;
  top: 7px;
  left: 14px;
  width: 20px;
  height: 20px;
  border-radius: 50%;
  background: #ff99a4;
  color: #1a1a1a;
  text-align: center;
  line-height: 20px;
}
.weather-text {
  display: flex;
  flex-direction: column;
  align-items: flex-start;
  padding-top: 9px;
}
.dim {
  color: #c3c9cb;
}
.apps {
  display: flex;
  align-items: center;
  padding-bottom: 1px;
}
.app {
  position: relative;
  display: flex;
  align-items: center;
  justify-content: center;
  width: 55px;
  height: 50px;
}
.search {
  display: flex;
  align-items: center;
  gap: 7px;
  width: 125px;
  height: 40px;
  margin: 0 4.500px 0 5.500px;
  padding-left: 27.500px;
  border: 1px solid #2f4046;
  border-radius: 20px;
  background: #24363b;
}
.search .fit {
  margin-top: 2px;
}
.search svg {
  margin-top: 1px;
}
.running::after,
.current::after {
  position: absolute;
  bottom: 1px;
  left: 23.500px;
  width: 8px;
  height: 4px;
  border-radius: 2px;
  background: #93999b;
  content: '';
}
.current {
  width: 50px;
  margin-left: 2.500px;
  border: 1px solid #2d3e43;
  border-radius: 5px;
  background: #24353b;
}
.current::after {
  bottom: 0;
  left: 14px;
  width: 20px;
  background: #d995dc;
}
.profile {
  position: absolute;
  top: 3px;
  left: 25px;
  width: 20px;
  height: 20px;
  border-radius: 50%;
  background: #ea3b77;
  color: #f6b3ca;
  font-size: 12px;
  text-align: center;
}
.tray {
  display: flex;
  flex: 1;
  padding-right: 24px;
}
.up {
  margin: 23px 0 0 auto;
}
.lang {
  display: flex;
  flex-direction: column;
  align-items: center;
  width: 34px;
  margin: 10px 0 0 23px;
}
.wifi {
  margin: 19px 0 0 19px;
}
.sound {
  margin: 20px 0 0 8px;
}
.battery {
  margin: 19px 0 0 8px;
}
.clock {
  display: flex;
  flex-direction: column;
  align-items: flex-end;
  margin: 9px 0 0 21.500px;
}
</style>
